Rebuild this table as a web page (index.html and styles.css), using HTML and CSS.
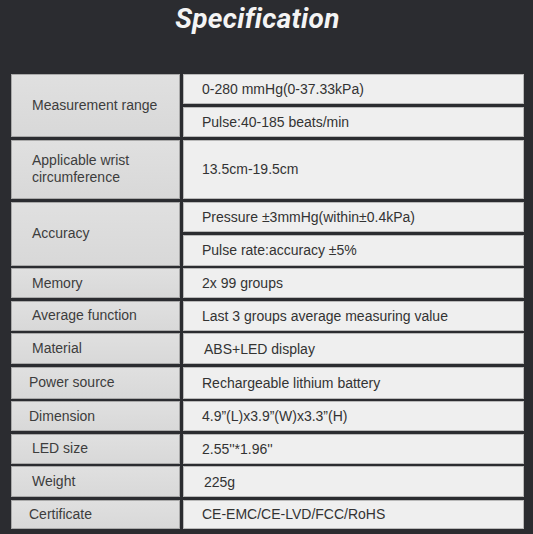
FILE: index.html
```html
<!DOCTYPE html>
<html>
<head>
<meta charset="utf-8">
<link rel="stylesheet" href="styles.css">
</head>
<body>
<h1 class="title">Specification</h1>
<div class="spec">
  <div class="row r1">
    <div class="label">Measurement range</div>
    <div class="value multi">
      <div class="sub">0-280 mmHg(0-37.33kPa)</div>
      <div class="sub">Pulse:40-185 beats/min</div>
    </div>
  </div>
  <div class="row r2">
    <div class="label">Applicable wrist circumference</div>
    <div class="value single">13.5cm-19.5cm</div>
  </div>
  <div class="row r3">
    <div class="label">Accuracy</div>
    <div class="value multi">
      <div class="sub">Pressure ±3mmHg(within±0.4kPa)</div>
      <div class="sub">Pulse rate:accuracy ±5%</div>
    </div>
  </div>
  <div class="row r4">
    <div class="label">Memory</div>
    <div class="value single">2x 99 groups</div>
  </div>
  <div class="row r5">
    <div class="label">Average function</div>
    <div class="value single">Last 3 groups average measuring value</div>
  </div>
  <div class="row r6">
    <div class="label">Material</div>
    <div class="value single shift">ABS+LED display</div>
  </div>
  <div class="row r7">
    <div class="label tight">Power source</div>
    <div class="value single">Rechargeable lithium battery</div>
  </div>
  <div class="row r8">
    <div class="label tight">Dimension</div>
    <div class="value single">4.9”(L)x3.9”(W)x3.3”(H)</div>
  </div>
  <div class="row r9">
    <div class="label">LED size</div>
    <div class="value single">2.55''*1.96''</div>
  </div>
  <div class="row r10">
    <div class="label">Weight</div>
    <div class="value single shift">225g</div>
  </div>
  <div class="row r11">
    <div class="label tight">Certificate</div>
    <div class="value single">CE-EMC/CE-LVD/FCC/RoHS</div>
  </div>
</div>
</body>
</html>
```
FILE: styles.css
```css
html, body {
  margin: 0;
  padding: 0;
}
body {
  background: #2b2c30;
  width: 533px;
  height: 534px;
  overflow: hidden;
  font-family: "Liberation Sans", Arial, sans-serif;
}
.title {
  margin: 0;
  height: 74px;
  box-sizing: border-box;
  padding: 0 18px 0 0;
  text-align: center;
  font-family: Roboto, "DejaVu Sans", sans-serif;
  font-weight: 700;
  font-style: italic;
  font-size: 28px;
  line-height: 38px;
  color: #f4f4f4;
  letter-spacing: 0.3px;
}
.spec {
  margin: 0 9px 0 11px;
  display: flex;
  flex-direction: column;
  gap: 2.5px;
}
.row {
  display: grid;
  grid-template-columns: 169px 1fr;
  column-gap: 3px;
}
.r1 { height: 63px; }
.r2 { height: 59.5px; }
.r3 { height: 64px; }
.r4 { height: 30px; }
.r5 { height: 30px; }
.r6 { height: 31px; }
.r7 { height: 32px; }
.r8 { height: 30px; }
.r9 { height: 30px; }
.r10 { height: 31px; }
.r11 { height: 29.5px; }
.label {
  background: linear-gradient(#e0e0e0, #d8d8d8);
  box-shadow: inset 0 0 0 1px #a9a9a9;
  color: #3d3d3d;
  font-size: 14px;
  line-height: 17px;
  display: flex;
  align-items: center;
  padding: 0 8px 0 21px;
}
.label.tight {
  padding-left: 18px;
}
.value {
  font-size: 14px;
  color: #333;
}
.value.single, .sub {
  background: #efefef;
  box-shadow: inset 0 0 0 1px #b9b9b9;
  display: flex;
  align-items: center;
  padding-left: 19px;
}
.value.shift {
  padding-left: 21px;
}
.value.multi {
  display: flex;
  flex-direction: column;
  gap: 2.5px;
}
.sub {
  flex: 1;
}
```
